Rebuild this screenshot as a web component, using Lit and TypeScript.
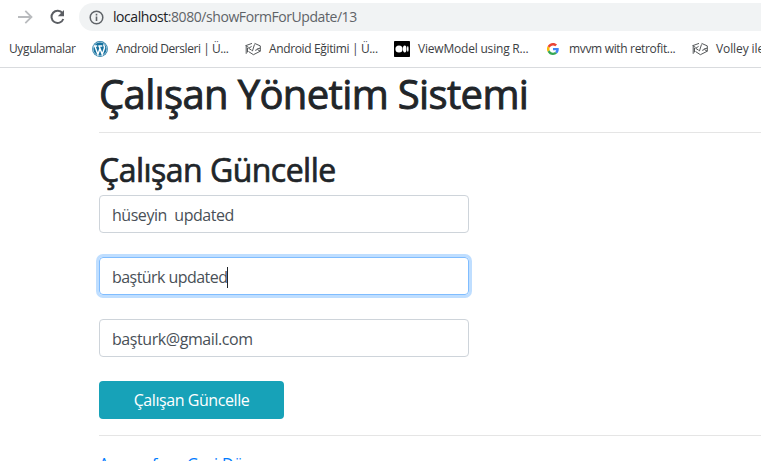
import { LitElement, html, css, svg } from "lit";
import { customElement } from "lit/decorators.js";

const wordpress = svg`<svg width="16" height="16" viewBox="0 0 16 16">
  <circle cx="8" cy="8" r="7.9" fill="#16719f"/>
  <circle cx="8" cy="8" r="6.9" fill="none" stroke="#d5e8f1" stroke-width=".7"/>
  <path d="M1.8 5h3.4M6.3 5h4M2.9 5.2l3 8.2 2.2-6.3M7.2 5.2l3 8.2 2.2-6.2c.6-1.8-1-2.200-.6-3.8" fill="none" stroke="#fff" stroke-width="1.45"/>
</svg>`;

const codeCap = svg`<svg width="16" height="16" viewBox="0 0 16 16" fill="none" stroke="#4c4f51" stroke-width=".95" stroke-linejoin="round">
  <path d="M7 2.400L.6 4.700l3 1.700M1.200 5.400v7.400M2.500 6.900v4.500M3.500 10.500l4.900 3.200 6.900-3.500-2.500-1.400M6.600 5.400L3.700 7.300l3 2M9.600 2.400l5.700 2.500v2.200l-3.500 1M15.300 7v3.200M9.500 3.400L7.400 10.200M10.200 9.400l2.400-1"/>
</svg>`;

const medium = svg`<svg width="16" height="16" viewBox="0 0 16 16">
  <rect width="16" height="16" rx=".7" fill="#000"/>
  <circle cx="5" cy="8" r="3.600" fill="#fff"/>
  <ellipse cx="10.700" cy="8" rx="1.800" ry="3.400" fill="#fff"/>
  <ellipse cx="13.800" cy="8" rx=".8" ry="3" fill="#fff"/>
</svg>`;

const google = svg`<svg width="12" height="12" viewBox="0 0 48 48">
  <path fill="#ea4335" d="M24 9.500c3.500 0 6.700 1.200 9.200 3.600l6.900-6.900C35.900 2.400 30.500 0 24 0 14.600 0 6.500 5.400 2.600 13.200l8 6.200C12.400 13.700 17.700 9.500 24 9.500z"/>
  <path fill="#4285f4" d="M47 24.500c0-1.600-.2-3.100-.4-4.500H24v9h12.900c-.6 3-2.200 5.500-4.700 7.200l7.700 6C44.400 38 47 31.800 47 24.500z"/>
  <path fill="#fbbc05" d="M10.500 28.600a14.500 14.500 0 0 1 0-9.200l-8-6.200a24 24 0 0 0 0 21.600z"/>
  <path fill="#34a853" d="M24 48c6.500 0 11.900-2.100 15.900-5.800l-7.700-6c-2.200 1.500-4.900 2.300-8.200 2.300-6.300 0-11.600-4.200-13.500-9.900l-8 6.200C6.500 42.600 14.600 48 24 48z"/>
</svg>`;

const bookmarks = [
  { icon: wordpress, label: "Android Dersleri | Ü...", cls: "b1" },
  { icon: codeCap, label: "Android Eğitimi | Ü...", cls: "b2" },
  { icon: medium, label: "ViewModel using R...", cls: "b3" },
  { icon: google, label: "mvvm with retrofit...", cls: "b4" },
  { icon: codeCap, label: "Volley ile", cls: "b5" },
];

@customElement("browser-bar")
export class BrowserBar extends LitElement {
  static styles = css`
    :host { display: block; height: 67px; border-bottom: 1px solid #d9dbde; background: #fff; }
    svg { display: block; flex: none; }
    .nav { display: flex; align-items: center; height: 28px; padding-top: 3px; }
    .forward { margin-left: 17px; }
    .reload { margin-left: 16px; }
    .address { display: flex; align-items: center; flex: 1; height: 28px; margin-left: 13px; padding-left: 10px; background: #f1f3f4; border-radius: 14px 0 0 14px; font: 14px/20px "Open Sans", "Noto Sans", sans-serif; color: #5f6368; white-space: nowrap; }
    .url { margin-left: 9px; letter-spacing: -.43px; }
    .host { color: #202124; }
    .marks { display: flex; height: 36px; align-items: center; font: 12px/16px "Open Sans", "Noto Sans", sans-serif; color: #3c4043; white-space: nowrap; overflow: hidden; }
    .apps { margin-left: 9px; width: 83px; flex: none; letter-spacing: -.38px; }
    .mark { display: flex; align-items: center; flex: none; }
    .icon { display: flex; justify-content: center; width: 16px; margin-right: 8px; }
    .b1 { width: 153px; letter-spacing: -.45px; }
    .b2 { width: 149px; letter-spacing: -.36px; }
    .b3 { width: 151px; letter-spacing: -.2px; }
    .b4 { width: 147px; letter-spacing: -.33px; }
    .b5 { width: 90px; letter-spacing: -.1px; }
  `;
  render() {
    return html`
      <div class="nav">
        <svg class="forward" width="16" height="16" viewBox="0 0 16 16" fill="none" stroke="#b9bbbe" stroke-width="1.8"><path d="M1 8h13M8.300 1.800L14.500 8l-6.200 6.200"/></svg>
        <svg class="reload" width="17" height="16" viewBox="0 0 17 16"><path d="M13.500 4.200A6.100 6.100 0 1 0 14.300 10" fill="none" stroke="#5b5e63" stroke-width="2"/><path d="M15 1v6.200H8.800z" fill="#5b5e63"/></svg>
        <div class="address">
          <svg width="15" height="15" viewBox="0 0 15 15"><circle cx="7.500" cy="7.500" r="6.300" fill="none" stroke="#5f6368" stroke-width="1.500"/><path d="M6.700 3.800h1.600v1.600H6.700zM6.700 6.600h1.600v4.500H6.700z" fill="#5f6368"/></svg>
          <span class="url"><span class="host">localhost</span>:8080/showFormForUpdate/13</span>
        </div>
      </div>
      <div class="marks">
        <span class="apps">Uygulamalar</span>
        ${bookmarks.map((b) => html`<span class="mark ${b.cls}"><span class="icon">${b.icon}</span><span>${b.label}</span></span>`)}
      </div>`;
  }
}

@customElement("app-root")
export class AppRoot extends LitElement {
  static styles = css`
    :host { display: block; height: 461px; overflow: hidden; background: #fff; color: #212529; font: 16px/24px "Open Sans", "Noto Sans", sans-serif; }
    .page { margin-left: 99px; white-space: nowrap; }
    h1, h2 { box-sizing: border-box; margin: 0; font-weight: 400; -webkit-text-stroke: .9px #212529; }
    h1 { height: 48px; padding-top: 2px; font-size: 40px; line-height: 48px; letter-spacing: -.64px; }
    h2 { height: 38px; padding-top: 2px; font-size: 32px; line-height: 38px; margin-bottom: 8px; letter-spacing: -.52px; -webkit-text-stroke-width: .7px; }
    hr { margin: 16px 0; border: 0; border-top: 1px solid #e5e5e5; }
    .field { box-sizing: border-box; display: flex; align-items: center; width: 370px; height: 38px; padding: 2px 12px 0; margin-bottom: 24px; border: 1px solid #ced4da; border-radius: 4px; color: #495057; white-space: pre; }
    .v1 { letter-spacing: -.46px; }
    .v2 { letter-spacing: -.55px; }
    .v3 { letter-spacing: -.43px; }
    .focus { border-color: #80bdff; box-shadow: 0 0 0 3px #bfdeff; }
    .caret { width: 1px; height: 21px; background: #212529; }
    .button { display: flex; align-items: center; justify-content: center; width: 185px; height: 38px; border: 0; padding: 0; border-radius: 4px; background: #17a2b8; color: #fff; font: inherit; letter-spacing: -.43px; }
    a { color: #007bff; text-decoration: none; letter-spacing: -.06px; }
  `;
  render() {
    return html`
      <browser-bar></browser-bar>
      <main class="page">
        <h1>Çalışan Yönetim Sistemi</h1>
        <hr>
        <h2>Çalışan Güncelle</h2>
        <div class="field"><span class="v1">hüseyin  updated</span></div>
        <div class="field focus"><span class="v2">baştürk updated</span><i class="caret"></i></div>
        <div class="field"><span class="v3">başturk@gmail.com</span></div>
        <button class="button">Çalışan Güncelle</button>
        <hr>
        <a>Anasayfaya Geri Dön</a>
      </main>`;
  }
}
